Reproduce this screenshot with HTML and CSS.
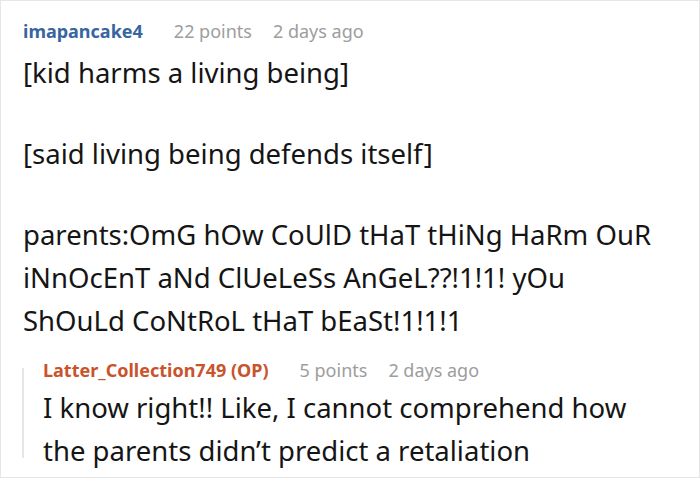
FILE: index.html
```html
<!DOCTYPE html>
<html>
<head>
<meta charset="utf-8">
<link rel="stylesheet" href="styles.css">
</head>
<body>
<div class="card">
  <div class="comment">
    <div class="meta">
      <span class="user">imapancake4</span>
      <span class="info points">22 points</span>
      <span class="info">2 days ago</span>
    </div>
    <div class="body">
      <p>[kid harms a living being]</p>
      <p>[said living being defends itself]</p>
      <p>parents:OmG hOw CoUlD tHaT tHiNg HaRm OuR iNnOcEnT aNd ClUeLeSs AnGeL??!1!1! yOu ShOuLd CoNtRoL tHaT bEaSt!1!1!1</p>
    </div>
    <div class="reply">
      <div class="meta">
        <span class="user op">Latter_Collection749 (OP)</span>
        <span class="info points">5 points</span>
        <span class="info">2 days ago</span>
      </div>
      <div class="body body-reply">
        <p>I know right!! Like, I cannot comprehend how the parents didn’t predict a retaliation</p>
      </div>
    </div>
  </div>
</div>
</body>
</html>
```
FILE: styles.css
```css
html, body {
  margin: 0;
  padding: 0;
  background: #ffffff;
}
body {
  font-family: "Noto Sans", "Open Sans", sans-serif;
  color: #151515;
}
.card {
  box-sizing: border-box;
  width: 700px;
  height: 478px;
  border: 1px solid #e6e6e6;
  overflow: hidden;
}
.comment {
  padding: 18px 30px 0 22px;
}
.meta {
  display: flex;
  align-items: baseline;
  height: 24px;
  line-height: 24px;
  font-size: 18px;
  white-space: nowrap;
}
.user {
  font-weight: 700;
  color: #38659f;
  margin-right: 31px;
}
.user.op {
  color: #c9532b;
}
.info {
  color: #9d9d9d;
}
.points {
  margin-right: 21px;
}
.body {
  margin-top: 8px;
  font-size: 27.5px;
  line-height: 43px;
}
.body p {
  margin: 0 0 38px 0;
}
.body p:last-child {
  margin-bottom: 0;
}
.reply {
  position: relative;
  margin-top: 16px;
  padding-left: 20px;
}
.reply::before {
  content: "";
  position: absolute;
  left: -1px;
  top: 10px;
  width: 2px;
  height: 90px;
  background: #e6e6e6;
}
.body-reply {
  margin-top: 4px;
}
```
